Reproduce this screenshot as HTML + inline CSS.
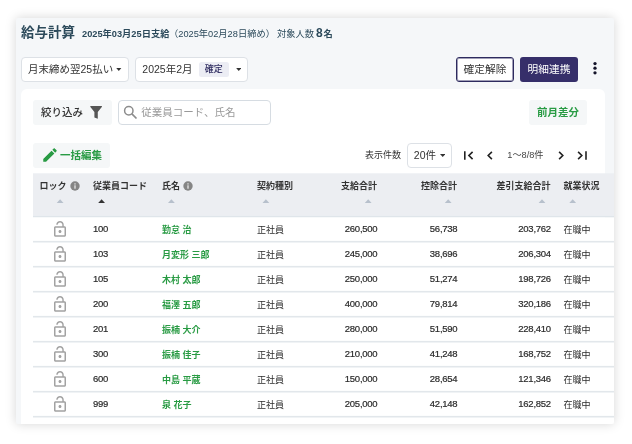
<!DOCTYPE html>
<html lang="ja">
<head>
<meta charset="utf-8">
<title>給与計算</title>
<style>
html,body{margin:0;padding:0;}
body{width:632px;height:444px;background:#fff;overflow:hidden;position:relative;
  font-family:"Liberation Sans","Noto Sans CJK JP",sans-serif;color:#333;}
.abs{position:absolute;white-space:nowrap;}
#card{will-change:transform;position:absolute;left:16px;top:18px;width:598px;height:406px;background:#f5f7f9;border-radius:2px;
  box-shadow:0 0 11px rgba(0,0,0,.17);overflow:hidden;}
#panel{position:absolute;left:3px;top:71px;width:584px;height:360px;background:#fff;border-radius:6px;}
.title{left:3px;top:4.8px;font-size:13.5px;font-weight:bold;color:#2c4a5b;line-height:20px;}
.sub{font-size:9.25px;color:#2c4a5b;line-height:12px;top:10px;}
.dd{height:22.5px;border:1px solid #dde1e6;border-radius:4px;background:#fff;box-sizing:content-box;top:39px;}
.btn{height:21.5px;border-radius:3px;font-size:10.7px;line-height:21.5px;text-align:center;top:39px;}
.tool{background:#f5f7f8;border-radius:3px;height:24.5px;}
table{border-collapse:collapse;}
#tbl{position:absolute;left:15px;top:155px;width:600px;}
#thead{position:absolute;left:0;top:0;width:600px;height:43px;}
.th{font-size:9px;font-weight:bold;color:#333;line-height:12px;top:7px;}
.row{position:absolute;left:0;width:600px;height:25px;}
.c{font-size:9px;line-height:12px;top:6.4px;color:#2b2b2b;}
.n{top:5.4px;font-size:9.5px;letter-spacing:-0.27px;-webkit-text-stroke:0.2px #2b2b2b;}
.g{color:#299b44;font-weight:bold;}
.r{text-align:right;}
.arrow{width:0;height:0;border-left:3.2px solid transparent;border-right:3.2px solid transparent;border-bottom:3.6px solid #b9c2ce;top:26.5px;}
.arrow.on{border-bottom-color:#333;}
</style>
</head>
<body>
<div id="card"><div id="in" style="position:absolute;left:2px;top:0;width:620px;height:420px;">
  <div class="abs title">給与計算</div>
  <div class="abs sub" style="left:64px;font-weight:bold;">2025年03月25日支給</div>
  <div class="abs sub" style="left:151px;">（2025年02月28日締め）</div>
  <div class="abs sub" style="left:259px;">対象人数</div>
  <div class="abs sub" style="left:298px;font-weight:bold;font-size:12px;top:8.75px;">8</div>
  <div class="abs sub" style="left:305.5px;font-weight:bold;">名</div>

  <div class="abs dd" style="left:2.5px;width:106.5px;">
    <div class="abs" style="left:6.5px;top:0;font-size:10.5px;line-height:22.5px;color:#333;">月末締め翌25払い</div>
    <svg class="abs" style="left:94.9px;top:9.7px" width="5.6" height="2.9" viewBox="0 0 7 4"><path d="M0 0h7L3.500 4z" fill="#333"/></svg>
  </div>
  <div class="abs dd" style="left:117px;width:111px;">
    <div class="abs" style="left:6.3px;top:0;font-size:10.5px;line-height:22.5px;color:#333;">2025年2月</div>
    <div class="abs" style="left:62.8px;top:4px;width:30px;height:14.5px;border-radius:2.5px;background:#ecedf4;font-size:9px;font-weight:500;color:#2e2b5f;line-height:14.5px;text-align:center;">確定</div>
    <svg class="abs" style="left:99.7px;top:9.5px" width="5.5" height="3" viewBox="0 0 6 3.5"><path d="M0 0h6L3 3.5z" fill="#333"/></svg>
  </div>

  <div class="abs btn" style="left:438px;width:56px;height:22.5px;line-height:22.5px;border:1px solid #2e2b5f;box-shadow:inset 0 0 0 1px rgba(46,43,95,.45);background:#fff;color:#333;">確定解除</div>
  <div class="abs btn" style="left:502px;width:58px;height:24.5px;line-height:24.5px;background:#362f6a;color:#fff;">明細連携</div>
  <svg class="abs" style="left:574px;top:42.7px" width="6" height="14" viewBox="0 0 6 14"><circle cx="3" cy="2.6" r="1.65" fill="#14142a"/><circle cx="3" cy="7.2" r="1.65" fill="#14142a"/><circle cx="3" cy="11.8" r="1.65" fill="#14142a"/></svg>

  <div id="panel">
    <div class="abs tool" style="left:12px;top:11.4px;width:79px;">
      <div class="abs" style="left:8px;top:0;font-size:10.5px;line-height:24.5px;color:#333;font-weight:500;">絞り込み</div>
      <svg class="abs" style="left:56.7px;top:5.6px" width="12.2" height="12.8" viewBox="0 0 12.2 12.8"><path d="M0.2 0.7Q0 0 0.7 0H11.5Q12.2 0 12 0.7L7.8 5.9V12.7L4.4 11.4V5.9Z" fill="#555"/></svg>
    </div>
    <div class="abs" style="left:96.8px;top:11.2px;width:151.7px;height:23px;border:1px solid #d6dce2;border-radius:4px;background:#fff;">
      <svg class="abs" style="left:4.2px;top:4px" width="15" height="15" viewBox="0 0 15 15"><circle cx="5.8" cy="5.8" r="4.2" fill="none" stroke="#8c8c8c" stroke-width="1.5"/><path d="M8.900 8.900L13.500 13.500" stroke="#8c8c8c" stroke-width="1.7"/></svg>
      <div class="abs" style="left:22.5px;top:0;font-size:10.5px;line-height:23px;color:#999;">従業員コード、氏名</div>
    </div>
    <div class="abs tool" style="left:508px;top:11.4px;width:58px;font-size:10.5px;line-height:24.5px;font-weight:bold;color:#299b44;text-align:center;">前月差分</div>

    <div class="abs tool" style="left:12px;top:54.2px;width:77px;">
      <svg class="abs" style="left:8.4px;top:2.9px" width="18" height="18" viewBox="0 0 24 24"><path d="M3 17.25V21h3.75L17.81 9.94l-3.75-3.75L3 17.25zM20.71 7.04c.39-.39.39-1.02 0-1.41l-2.34-2.34c-.39-.39-1.02-.39-1.41 0l-1.83 1.83 3.75 3.75 1.83-1.83z" fill="#299b44"/></svg>
      <div class="abs" style="left:27px;top:0;font-size:10.5px;line-height:24.5px;font-weight:bold;color:#299b44;">一括編集</div>
    </div>

    <div class="abs" style="left:344px;top:60.4px;font-size:9px;line-height:12px;color:#333;">表示件数</div>
    <div class="abs" style="left:386px;top:54.4px;width:43px;height:23px;border:1px solid #dde1e6;border-radius:4px;background:#fff;">
      <div class="abs" style="left:5.8px;top:0;font-size:10.5px;line-height:23px;color:#333;">20件</div>
      <svg class="abs" style="left:31.6px;top:10px" width="5.4" height="2.9" viewBox="0 0 6 3.5" preserveAspectRatio="none"><path d="M0 0h6L3 3.5z" fill="#333"/></svg>
    </div>
    <svg class="abs" style="left:442.9px;top:61.7px" width="10" height="9" viewBox="0 0 10 9"><path d="M0.8 0.3v8.4" stroke="#222" stroke-width="1.6" fill="none"/><path d="M8.6 0.9L4.9 4.5l3.7 3.6" stroke="#222" stroke-width="1.6" fill="none"/></svg>
    <svg class="abs" style="left:466.1px;top:61.7px" width="6" height="9" viewBox="0 0 6 9"><path d="M4.9 0.9L1.2 4.5l3.7 3.6" stroke="#222" stroke-width="1.6" fill="none"/></svg>
    <div class="abs" style="left:486.3px;top:60.4px;font-size:9.2px;line-height:12px;color:#444;">1～8/8件</div>
    <svg class="abs" style="left:536.8px;top:61.7px" width="6" height="9" viewBox="0 0 6 9"><path d="M1.1 0.9L4.8 4.5 1.1 8.1" stroke="#222" stroke-width="1.6" fill="none"/></svg>
    <svg class="abs" style="left:556px;top:61.7px" width="10" height="9" viewBox="0 0 10 9"><path d="M9 0.3v8.4" stroke="#222" stroke-width="1.6" fill="none"/><path d="M1.1 0.9L4.8 4.5 1.1 8.1" stroke="#222" stroke-width="1.6" fill="none"/></svg>
  </div>

  <div id="tbl">
    <svg class="abs" style="left:0;top:0" width="600" height="270" viewBox="0 0 600 270"><rect x="0" y="0.3" width="600" height="42.6" fill="#eceef2"/><rect x="0" y="42.9" width="600" height="1.6" fill="#dfe5ea"/><rect x="0" y="44.5" width="600" height="230" fill="#fff"/><rect x="0" y="67.9" width="600" height="1.6" fill="#e2e7eb"/><rect x="0" y="92.9" width="600" height="1.6" fill="#e2e7eb"/><rect x="0" y="117.9" width="600" height="1.6" fill="#e2e7eb"/><rect x="0" y="142.9" width="600" height="1.6" fill="#e2e7eb"/><rect x="0" y="167.9" width="600" height="1.6" fill="#e2e7eb"/><rect x="0" y="192.9" width="600" height="1.6" fill="#e2e7eb"/><rect x="0" y="217.9" width="600" height="1.6" fill="#e2e7eb"/><rect x="0" y="242.9" width="600" height="1.6" fill="#e2e7eb"/><path transform="translate(18 47.3) scale(.75)" fill="#a2a2a2" d="M12 17c1.1 0 2-.9 2-2s-.9-2-2-2-2 .9-2 2 .9 2 2 2zm6-9h-1V6c0-2.76-2.240-5-5-5S7 3.240 7 6h1.900c0-1.710 1.390-3.100 3.100-3.100 1.710 0 3.100 1.390 3.100 3.100v2H6c-1.100 0-2 .9-2 2v10c0 1.100.9 2 2 2h12c1.100 0 2-.9 2-2V10c0-1.100-.9-2-2-2zm0 12H6V10h12v10z"/><path transform="translate(18 72.3) scale(.75)" fill="#a2a2a2" d="M12 17c1.1 0 2-.9 2-2s-.9-2-2-2-2 .9-2 2 .9 2 2 2zm6-9h-1V6c0-2.76-2.240-5-5-5S7 3.240 7 6h1.900c0-1.710 1.390-3.100 3.100-3.100 1.710 0 3.100 1.390 3.100 3.100v2H6c-1.100 0-2 .9-2 2v10c0 1.100.9 2 2 2h12c1.100 0 2-.9 2-2V10c0-1.100-.9-2-2-2zm0 12H6V10h12v10z"/><path transform="translate(18 97.3) scale(.75)" fill="#a2a2a2" d="M12 17c1.1 0 2-.9 2-2s-.9-2-2-2-2 .9-2 2 .9 2 2 2zm6-9h-1V6c0-2.76-2.240-5-5-5S7 3.240 7 6h1.900c0-1.710 1.390-3.100 3.100-3.100 1.710 0 3.100 1.390 3.100 3.100v2H6c-1.100 0-2 .9-2 2v10c0 1.100.9 2 2 2h12c1.100 0 2-.9 2-2V10c0-1.100-.9-2-2-2zm0 12H6V10h12v10z"/><path transform="translate(18 122.3) scale(.75)" fill="#a2a2a2" d="M12 17c1.1 0 2-.9 2-2s-.9-2-2-2-2 .9-2 2 .9 2 2 2zm6-9h-1V6c0-2.76-2.240-5-5-5S7 3.240 7 6h1.900c0-1.710 1.390-3.100 3.100-3.100 1.710 0 3.100 1.390 3.100 3.100v2H6c-1.100 0-2 .9-2 2v10c0 1.100.9 2 2 2h12c1.100 0 2-.9 2-2V10c0-1.100-.9-2-2-2zm0 12H6V10h12v10z"/><path transform="translate(18 147.3) scale(.75)" fill="#a2a2a2" d="M12 17c1.1 0 2-.9 2-2s-.9-2-2-2-2 .9-2 2 .9 2 2 2zm6-9h-1V6c0-2.76-2.240-5-5-5S7 3.240 7 6h1.900c0-1.710 1.390-3.100 3.100-3.100 1.710 0 3.100 1.390 3.100 3.100v2H6c-1.100 0-2 .9-2 2v10c0 1.100.9 2 2 2h12c1.100 0 2-.9 2-2V10c0-1.100-.9-2-2-2zm0 12H6V10h12v10z"/><path transform="translate(18 172.3) scale(.75)" fill="#a2a2a2" d="M12 17c1.1 0 2-.9 2-2s-.9-2-2-2-2 .9-2 2 .9 2 2 2zm6-9h-1V6c0-2.76-2.240-5-5-5S7 3.240 7 6h1.900c0-1.710 1.390-3.100 3.100-3.100 1.710 0 3.100 1.390 3.100 3.100v2H6c-1.100 0-2 .9-2 2v10c0 1.100.9 2 2 2h12c1.100 0 2-.9 2-2V10c0-1.100-.9-2-2-2zm0 12H6V10h12v10z"/><path transform="translate(18 197.3) scale(.75)" fill="#a2a2a2" d="M12 17c1.1 0 2-.9 2-2s-.9-2-2-2-2 .9-2 2 .9 2 2 2zm6-9h-1V6c0-2.76-2.240-5-5-5S7 3.240 7 6h1.900c0-1.710 1.390-3.100 3.100-3.100 1.710 0 3.100 1.390 3.100 3.100v2H6c-1.100 0-2 .9-2 2v10c0 1.100.9 2 2 2h12c1.100 0 2-.9 2-2V10c0-1.100-.9-2-2-2zm0 12H6V10h12v10z"/><path transform="translate(18 222.3) scale(.75)" fill="#a2a2a2" d="M12 17c1.1 0 2-.9 2-2s-.9-2-2-2-2 .9-2 2 .9 2 2 2zm6-9h-1V6c0-2.76-2.240-5-5-5S7 3.240 7 6h1.900c0-1.710 1.390-3.100 3.100-3.100 1.710 0 3.100 1.390 3.100 3.100v2H6c-1.100 0-2 .9-2 2v10c0 1.100.9 2 2 2h12c1.100 0 2-.9 2-2V10c0-1.100-.9-2-2-2zm0 12H6V10h12v10z"/><path d="M23.7 30.1L27.1 26.2L30.5 30.1z" fill="#b7c0cc"/><path d="M65.2 30.1L68.6 26.2L72.0 30.1z" fill="#333"/><path d="M135.0 30.1L138.4 26.2L141.8 30.1z" fill="#b7c0cc"/><path d="M229.5 30.1L232.9 26.2L236.3 30.1z" fill="#b7c0cc"/><path d="M331.8 30.1L335.2 26.2L338.6 30.1z" fill="#b7c0cc"/><path d="M411.8 30.1L415.2 26.2L418.6 30.1z" fill="#b7c0cc"/><path d="M505.6 30.1L509.0 26.2L512.4 30.1z" fill="#b7c0cc"/><path d="M536.3 30.1L539.7 26.2L543.1 30.1z" fill="#b7c0cc"/></svg>
    <div id="thead">
      <div class="abs th" style="left:6.5px;">ロック</div>
      <svg class="abs" style="left:36.8px;top:7.6px" width="10" height="10" viewBox="0 0 10 10"><circle cx="5" cy="5" r="4.7" fill="#858585"/><rect x="4.400" y="4.3" width="1.2" height="3.4" fill="#f0f0f0"/><rect x="4.400" y="2.3" width="1.2" height="1.2" fill="#f0f0f0"/></svg>
      <div class="abs th" style="left:60px;">従業員コード</div>
      <div class="abs th" style="left:129px;">氏名</div>
      <svg class="abs" style="left:150.3px;top:7.6px" width="10" height="10" viewBox="0 0 10 10"><circle cx="5" cy="5" r="4.7" fill="#858585"/><rect x="4.400" y="4.3" width="1.2" height="3.4" fill="#f0f0f0"/><rect x="4.400" y="2.3" width="1.2" height="1.2" fill="#f0f0f0"/></svg>
      <div class="abs th" style="left:224px;">契約種別</div>
      <div class="abs th r" style="left:244px;width:100px;">支給合計</div>
      <div class="abs th r" style="left:324px;width:100px;">控除合計</div>
      <div class="abs th r" style="left:417.5px;width:100px;">差引支給合計</div>
      <div class="abs th" style="left:530.5px;">就業状況</div>
    </div>
    <div class="row" style="top:44.2px;">
      <div class="abs c n" style="left:60px;">100</div>
      <div class="abs c g" style="left:129px;">勤怠 治</div>
      <div class="abs c" style="left:224px;">正社員</div>
      <div class="abs c r n" style="left:244.3px;width:100px;">260,500</div>
      <div class="abs c r n" style="left:324.3px;width:100px;">56,738</div>
      <div class="abs c r n" style="left:417.8px;width:100px;">203,762</div>
      <div class="abs c" style="left:530.5px;">在職中</div>
    </div>
    <div class="row" style="top:69.2px;">
      <div class="abs c n" style="left:60px;">103</div>
      <div class="abs c g" style="left:129px;">月変形 三郎</div>
      <div class="abs c" style="left:224px;">正社員</div>
      <div class="abs c r n" style="left:244.3px;width:100px;">245,000</div>
      <div class="abs c r n" style="left:324.3px;width:100px;">38,696</div>
      <div class="abs c r n" style="left:417.8px;width:100px;">206,304</div>
      <div class="abs c" style="left:530.5px;">在職中</div>
    </div>
    <div class="row" style="top:94.2px;">
      <div class="abs c n" style="left:60px;">105</div>
      <div class="abs c g" style="left:129px;">木村 太郎</div>
      <div class="abs c" style="left:224px;">正社員</div>
      <div class="abs c r n" style="left:244.3px;width:100px;">250,000</div>
      <div class="abs c r n" style="left:324.3px;width:100px;">51,274</div>
      <div class="abs c r n" style="left:417.8px;width:100px;">198,726</div>
      <div class="abs c" style="left:530.5px;">在職中</div>
    </div>
    <div class="row" style="top:119.2px;">
      <div class="abs c n" style="left:60px;">200</div>
      <div class="abs c g" style="left:129px;">福澤 五郎</div>
      <div class="abs c" style="left:224px;">正社員</div>
      <div class="abs c r n" style="left:244.3px;width:100px;">400,000</div>
      <div class="abs c r n" style="left:324.3px;width:100px;">79,814</div>
      <div class="abs c r n" style="left:417.8px;width:100px;">320,186</div>
      <div class="abs c" style="left:530.5px;">在職中</div>
    </div>
    <div class="row" style="top:144.2px;">
      <div class="abs c n" style="left:60px;">201</div>
      <div class="abs c g" style="left:129px;">振楠 大介</div>
      <div class="abs c" style="left:224px;">正社員</div>
      <div class="abs c r n" style="left:244.3px;width:100px;">280,000</div>
      <div class="abs c r n" style="left:324.3px;width:100px;">51,590</div>
      <div class="abs c r n" style="left:417.8px;width:100px;">228,410</div>
      <div class="abs c" style="left:530.5px;">在職中</div>
    </div>
    <div class="row" style="top:169.2px;">
      <div class="abs c n" style="left:60px;">300</div>
      <div class="abs c g" style="left:129px;">振楠 佳子</div>
      <div class="abs c" style="left:224px;">正社員</div>
      <div class="abs c r n" style="left:244.3px;width:100px;">210,000</div>
      <div class="abs c r n" style="left:324.3px;width:100px;">41,248</div>
      <div class="abs c r n" style="left:417.8px;width:100px;">168,752</div>
      <div class="abs c" style="left:530.5px;">在職中</div>
    </div>
    <div class="row" style="top:194.2px;">
      <div class="abs c n" style="left:60px;">600</div>
      <div class="abs c g" style="left:129px;">中島 平蔵</div>
      <div class="abs c" style="left:224px;">正社員</div>
      <div class="abs c r n" style="left:244.3px;width:100px;">150,000</div>
      <div class="abs c r n" style="left:324.3px;width:100px;">28,654</div>
      <div class="abs c r n" style="left:417.8px;width:100px;">121,346</div>
      <div class="abs c" style="left:530.5px;">在職中</div>
    </div>
    <div class="row" style="top:219.2px;">
      <div class="abs c n" style="left:60px;">999</div>
      <div class="abs c g" style="left:129px;">泉 花子</div>
      <div class="abs c" style="left:224px;">正社員</div>
      <div class="abs c r n" style="left:244.3px;width:100px;">205,000</div>
      <div class="abs c r n" style="left:324.3px;width:100px;">42,148</div>
      <div class="abs c r n" style="left:417.8px;width:100px;">162,852</div>
      <div class="abs c" style="left:530.5px;">在職中</div>
    </div>
  </div>
</div></div>
</body>
</html>
